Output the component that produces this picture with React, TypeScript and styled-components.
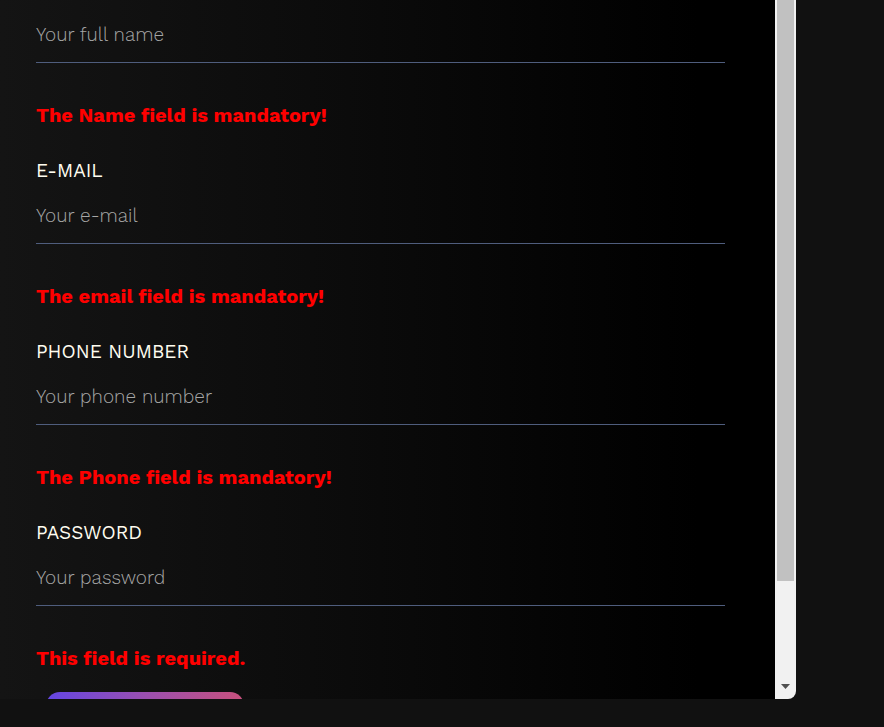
import React from "react";
import styled, { createGlobalStyle } from "styled-components";

const Global = createGlobalStyle`
  html, body { margin: 0; padding: 0; background: #111111; }
  body { font-family: "Work Sans", Inter, "Open Sans", sans-serif; overflow: hidden; }
`;

const Frame = styled.div`
  display: flex;
  width: 796px;
  height: 699px;
  border-bottom-right-radius: 8px;
  overflow: hidden;
`;

const Panel = styled.div`
  flex: 1;
  overflow: hidden;
  background: linear-gradient(90deg, #141414 0%, #0b0b0b 45%, #000000 90%);
  padding: 0 50px 0 36px;
`;

const Form = styled.form`
  display: flex;
  flex-direction: column;
  margin-top: -22px;
`;

const Field = styled.div`
  display: flex;
  flex-direction: column;
  margin-bottom: 32px;
`;

const Label = styled.label`
  display: block;
  height: 24px;
  line-height: 24px;
  font-size: 19px;
  font-weight: 400;
  color: #fffdf0;
`;

const Input = styled.input`
  margin-top: 4px;
  height: 57px;
  box-sizing: border-box;
  padding: 0;
  border: none;
  border-bottom: 1px solid #4f5d7d;
  background: transparent;
  font-family: inherit;
  font-size: 19px;
  font-weight: 300;
  color: #ddd;
  outline: none;
  &::placeholder { color: #a6a6a6; }
`;

const Error = styled.div`
  margin-top: 40px;
  height: 24px;
  line-height: 24px;
  font-size: 20px;
  font-weight: 700;
  color: #ff0000;
`;

const Submit = styled.button`
  margin: -10px 0 0 10px;
  width: 198px;
  height: 56px;
  border: none;
  border-radius: 14px;
  background: linear-gradient(90deg, #6446e4 0%, #9a4fb0 50%, #c8507c 100%);
  color: #fff;
  font-family: inherit;
  font-size: 18px;
  font-weight: 600;
`;

const Track = styled.div`
  width: 21px;
  flex: none;
  background: #f1f1f1;
  display: flex;
  flex-direction: column;
  justify-content: space-between;
  align-items: center;
  padding-bottom: 10px;
  box-sizing: border-box;
`;

const Thumb = styled.div`
  width: 17px;
  height: 581px;
  background: #c1c1c1;
`;

const Arrow = styled.svg`
  display: block;
`;

const fields = [
  { label: "NAME", placeholder: "Your full name", error: "The Name field is mandatory!" },
  { label: "E-MAIL", placeholder: "Your e-mail", error: "The email field is mandatory!" },
  { label: "PHONE NUMBER", placeholder: "Your phone number", error: "The Phone field is mandatory!" },
  { label: "PASSWORD", placeholder: "Your password", error: "This field is required." },
];

export default function App() {
  return (
    <>
      <Global />
      <Frame>
        <Panel>
          <Form onSubmit={(e) => e.preventDefault()}>
            {fields.map((f) => (
              <Field key={f.label}>
                <Label>{f.label}</Label>
                <Input placeholder={f.placeholder} />
                <Error>{f.error}</Error>
              </Field>
            ))}
            <Submit type="submit">Sign up</Submit>
          </Form>
        </Panel>
        <Track>
          <Thumb />
          <Arrow width="9" height="5" viewBox="0 0 9 5">
            <path d="M0 0 H9 L4.5 5 Z" fill="#505050" />
          </Arrow>
        </Track>
      </Frame>
    </>
  );
}
